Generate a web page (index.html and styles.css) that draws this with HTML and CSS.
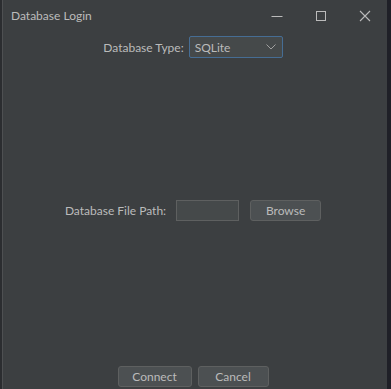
FILE: index.html
```html
<!DOCTYPE html>
<html lang="en">
<head>
    <meta charset="UTF-8">
    <title>Database Login</title>
    <link rel="stylesheet" href="styles.css">
</head>
<body>
<div class="side-left"></div>
<div class="win">
    <div class="titlebar">
        <span class="title">Database Login</span>
        <div class="controls">
            <span class="ctl">
                <svg width="12" height="12" viewBox="0 0 12 12"><path d="M0.5 6.5h11" stroke="#bbbbbb" stroke-width="1"/></svg>
            </span>
            <span class="ctl">
                <svg width="12" height="12" viewBox="0 0 12 12"><rect x="1.5" y="1.5" width="9" height="9" fill="none" stroke="#bbbbbb" stroke-width="1"/></svg>
            </span>
            <span class="ctl">
                <svg width="12" height="12" viewBox="0 0 12 12"><path d="M1 1L11 11M11 1L1 11" stroke="#bbbbbb" stroke-width="1.1"/></svg>
            </span>
        </div>
    </div>
    <div class="content">
        <div class="row row-type">
            <label>Database Type:</label>
            <div class="combo">
                <span>SQLite</span>
                <svg width="10" height="6" viewBox="0 0 10 6"><path d="M0.5 0.5L5 5L9.5 0.5" fill="none" stroke="#a0a0a0" stroke-width="1"/></svg>
            </div>
        </div>
        <div class="middle">
            <div class="row row-file">
                <label>Database File Path:</label>
                <div class="field"></div>
                <div class="btn btn-browse">Browse</div>
            </div>
        </div>
        <div class="row row-buttons">
            <div class="btn btn-connect">Connect</div>
            <div class="btn btn-cancel">Cancel</div>
        </div>
    </div>
</div>
<div class="side-right"></div>
</body>
</html>
```

FILE: styles.css
```css
* {margin: 0; padding: 0; box-sizing: border-box;}
html, body {width: 100%; height: 100%;}
body {display: flex; background: #2b2b2b; font-family: Lato, "Open Sans", sans-serif; font-size: 12px; color: #bbbbbb; overflow: hidden;}

.side-left {width: 3px; background: #2b2d30; border-right: 1px solid #4e5052;}
.side-right {width: 4px; background: #1f2027;}

.win {flex: 1; display: flex; flex-direction: column; background: #3c3f41;}

.titlebar {height: 32px; display: flex; align-items: center; justify-content: space-between;}
.title {padding-left: 8px; margin-top: -1px;}
.controls {display: flex; height: 100%;}
.ctl {width: 44px; display: flex; align-items: center; justify-content: center;}

.content {flex: 1; display: flex; flex-direction: column; padding: 4px 4px 2px 0;}
.row {display: flex; align-items: center; justify-content: center;}
.middle {flex: 1; display: flex; align-items: center; justify-content: center; padding-bottom: 3px;}

.row-type label {margin-right: 5px;}
.combo {width: 94px; height: 22px; display: flex; align-items: center; justify-content: space-between; padding: 0 6px 0 5px; background: #45494a; border: 1px solid #466d94; border-radius: 2px;}

.row-file label {margin-right: 10px;}
.field {width: 63px; height: 21px; background: #45494a; border: 1px solid #5e6060; margin-right: 11px;}

.btn {height: 21px; display: flex; align-items: center; justify-content: center; background: #4c5052; border: 1px solid #5e6060; border-radius: 3px;}
.btn-browse {width: 71px;}
.btn-connect {width: 74px; margin-right: 6px;}
.btn-cancel {width: 71px;}
```
